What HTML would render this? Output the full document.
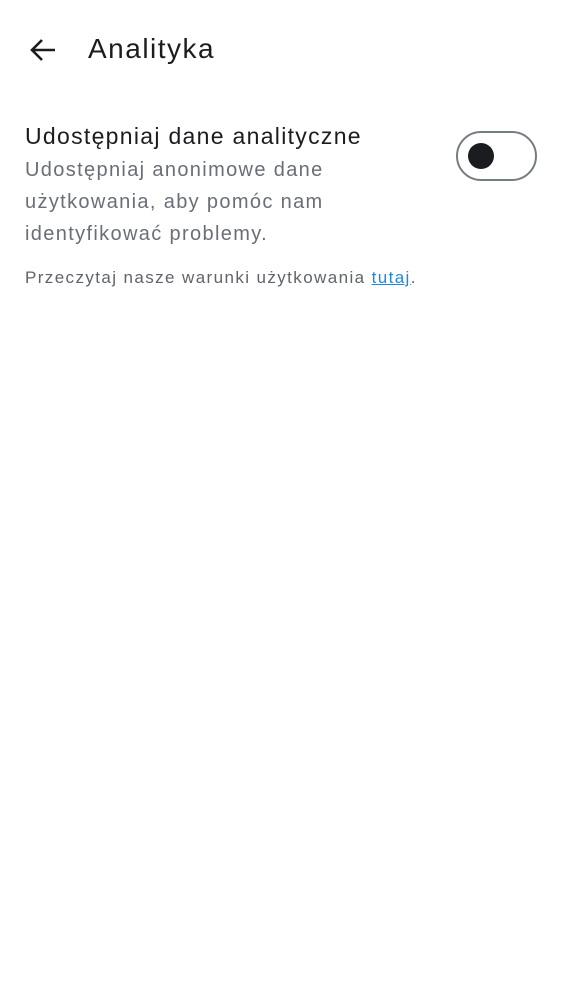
<!DOCTYPE html>
<html><head><meta charset="utf-8"><style>
body{margin:0;width:562px;height:1000px;background:#fff;font-family:"Liberation Sans",sans-serif;position:relative;overflow:hidden}
.t{position:absolute;white-space:nowrap}
</style></head><body>
<svg style="position:absolute;left:28px;top:36px" width="30" height="28" viewBox="0 0 30 28"><path d="M27 14H4M14 4L4 14l10 10" fill="none" stroke="#1b1c1f" stroke-width="2.6"/></svg>
<div class="t" style="left:88px;top:33px;font-size:28px;color:#1b1c1f;letter-spacing:1.5px">Analityka</div>
<div class="t" style="left:25px;top:123px;font-size:23px;color:#1b1c1f;letter-spacing:1.3px">Udostępniaj dane analityczne</div>
<div class="t" style="left:25px;top:154px;font-size:20px;line-height:32px;color:#6a6e76;letter-spacing:1.35px">Udostępniaj anonimowe dane<br>użytkowania, aby pomóc nam<br>identyfikować problemy.</div>
<div class="t" style="left:25px;top:268px;font-size:17px;color:#5f636b;letter-spacing:1.4px">Przeczytaj nasze warunki użytkowania <span style="color:#1a88e0;text-decoration:underline">tutaj</span>.</div>
<div style="position:absolute;left:456px;top:131px;box-sizing:border-box;width:81px;height:50px;border:2.5px solid #777c84;border-radius:26px"></div>
<div style="position:absolute;left:468px;top:143px;width:26px;height:26px;border-radius:50%;background:#1b1c1f"></div>
</body></html>
